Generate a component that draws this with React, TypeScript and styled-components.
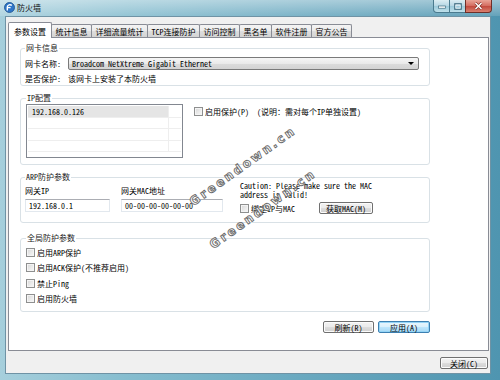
import React from 'react';
import styled, { createGlobalStyle } from 'styled-components';

const GlobalStyle = createGlobalStyle`
  html, body {
    margin: 0;
    padding: 0;
    background: #ffffff;
  }
  body {
    font-family: "Noto Sans Mono CJK SC", "Noto Sans CJK SC", "Liberation Mono", monospace;
    font-size: 8px;
    color: #000;
  }
  * {
    box-sizing: border-box;
  }
`;

const Window = styled.div`
  position: relative;
  width: 500px;
  height: 380px;
  display: flex;
  flex-direction: column;
  overflow: hidden;
  background: linear-gradient(90deg, #a6cfdc 0%, #86bdcf 25%, #6aa9c0 60%, #4f95b0 100%);
`;

const TitleBar = styled.div`
  height: 16px;
  display: flex;
  align-items: flex-start;
  flex-shrink: 0;
  background: linear-gradient(180deg, rgba(255, 255, 255, 0.45) 0%, rgba(255, 255, 255, 0.12) 100%);
`;

const AppIcon = styled.div`
  width: 11px;
  height: 11px;
  margin: 2px 2px 0 4px;
  display: flex;
`;

const Title = styled.div`
  line-height: 16px;
  font-size: 8px;
  color: #101010;
`;

const Controls = styled.div`
  margin-left: auto;
  margin-right: 8px;
  display: flex;
  height: 13px;
`;

const CaptionButton = styled.div<{ $w: number; $kind: 'min' | 'max' | 'close' }>`
  width: ${p => p.$w}px;
  height: 13px;
  display: flex;
  align-items: center;
  justify-content: center;
  border: 1px solid ${p => (p.$kind === 'close' ? '#6e2f28' : '#4a7a8e')};
  border-top: none;
  margin-left: ${p => (p.$kind === 'min' ? 0 : -1)}px;
  border-radius: ${p => (p.$kind === 'min' ? '0 0 0 4px' : p.$kind === 'close' ? '0 0 4px 0' : '0')};
  background: ${p =>
    p.$kind === 'close'
      ? 'linear-gradient(180deg, #e9a497 0%, #d46d61 48%, #c2493d 52%, #d9806f 100%)'
      : 'linear-gradient(180deg, #dcedf3 0%, #b7d7e4 48%, #9ccadb 52%, #bfe0ea 100%)'};
`;

const Client = styled.div`
  flex: 1;
  margin: 0 9px 6px 5px;
  display: flex;
  flex-direction: column;
  padding: 5px 1px 4px 2px;
  background: #f0f0f0;
  border: 1px solid #6f93a5;
`;

const TabStrip = styled.div`
  height: 15px;
  display: flex;
  align-items: flex-end;
  padding-left: 1px;
  position: relative;
  z-index: 1;
  flex-shrink: 0;
`;

const Tab = styled.div<{ $active?: boolean }>`
  height: ${p => (p.$active ? 16 : 13)}px;
  margin-bottom: ${p => (p.$active ? -1 : 0)}px;
  margin-left: -1px;
  padding: ${p => (p.$active ? '1px 5px 0' : '0 3.5px')};
  display: flex;
  align-items: center;
  white-space: nowrap;
  position: relative;
  z-index: ${p => (p.$active ? 2 : 1)};
  border: 1px solid #898c95;
  border-bottom: none;
  border-radius: 2px 2px 0 0;
  background: ${p =>
    p.$active ? '#ffffff' : 'linear-gradient(180deg, #f4f4f4 0%, #ebebeb 50%, #dedede 50%, #d4d4d4 100%)'};
`;

const Panel = styled.div`
  flex: 1;
  background: #ffffff;
  border: 1px solid #898c95;
  padding: 5px 0 0 11px;
  display: flex;
  flex-direction: column;
`;

const Group = styled.fieldset<{ $h: number; $top: number; $pad: string }>`
  margin: ${p => p.$top}px 0 0 0;
  width: 410px;
  height: ${p => p.$h}px;
  padding: ${p => p.$pad};
  border: 1px solid #d9e1e6;
  border-radius: 3px;
  min-width: 0;
  flex-shrink: 0;
`;

const Legend = styled.legend`
  padding: 0 1px;
  margin-left: 0;
  line-height: 10px;
  font-size: 8px;
  color: #1a1a1a;
`;

const Row = styled.div<{ $h: number; $top?: number }>`
  display: flex;
  align-items: center;
  height: ${p => p.$h}px;
  margin-top: ${p => p.$top || 0}px;
  white-space: nowrap;
`;

const Label = styled.span<{ $w?: number }>`
  display: inline-block;
  width: ${p => (p.$w ? `${p.$w}px` : 'auto')};
  flex-shrink: 0;
`;

const Combo = styled.div`
  width: 351px;
  height: 13px;
  display: flex;
  align-items: center;
  padding: 0 4px 0 3px;
  border: 1px solid #7a7a7a;
  border-radius: 2px;
  background: linear-gradient(180deg, #f6f6f6 0%, #eaeaea 50%, #dcdcdc 50%, #d3d3d3 100%);
`;

const ComboText = styled.span`
  flex: 1;
`;

const Arrow = styled.span`
  width: 0;
  height: 0;
  border-left: 3px solid transparent;
  border-right: 3px solid transparent;
  border-top: 3px solid #000;
`;

const ListBox = styled.div`
  width: 157px;
  height: 54px;
  border: 1px solid #828790;
  background: #fff;
  padding: 1px;
  overflow: hidden;
  flex-shrink: 0;
`;

const ListRow = styled.div`
  display: flex;
  height: 11.5px;
  border-bottom: 1px solid #eeeeee;
`;

const ListCell = styled.div<{ $wide?: boolean; $selected?: boolean }>`
  width: ${p => (p.$wide ? 142 : 12)}px;
  display: flex;
  align-items: center;
  padding-left: 4px;
  border-right: ${p => (p.$wide ? '1px solid #eeeeee' : 'none')};
  background: ${p => (p.$selected ? '#e5e5e5' : 'transparent')};
`;

const Check = styled.span`
  width: 9px;
  height: 9px;
  flex-shrink: 0;
  border: 1px solid #8e8f8f;
  background: linear-gradient(135deg, #d6d6d6 0%, #ececec 60%, #f7f7f7 100%);
  box-shadow: inset 0 0 0 1px #f4f4f4;
  margin-right: 2px;
`;

const TextBox = styled.div<{ $w: number }>`
  width: ${p => p.$w}px;
  height: 13px;
  display: flex;
  align-items: center;
  padding-left: 3px;
  border: 1px solid #e2e8ee;
  border-top-color: #abadb3;
  background: #fff;
`;

const Column = styled.div<{ $w: number }>`
  width: ${p => p.$w}px;
  display: flex;
  flex-direction: column;
  flex-shrink: 0;
`;

const Caution = styled.div`
  line-height: 9px;
  margin-top: -1px;
  white-space: nowrap;
`;

const Button = styled.div<{ $w: number; $default?: boolean }>`
  width: ${p => p.$w}px;
  height: 12px;
  display: flex;
  align-items: center;
  justify-content: center;
  flex-shrink: 0;
  white-space: nowrap;
  border: 1px solid ${p => (p.$default ? '#3c7fb1' : '#707070')};
  border-radius: 2px;
  background: ${p =>
    p.$default
      ? 'linear-gradient(180deg, #eaf6fd 0%, #d9f0fc 50%, #bee6fd 50%, #a7d9f5 100%)'
      : 'linear-gradient(180deg, #f2f2f2 0%, #ebebeb 50%, #dddddd 50%, #cfcfcf 100%)'};
  box-shadow: inset 0 0 0 1px ${p => (p.$default ? '#94d4f6' : '#fbfbfb')};
`;

const ButtonRow = styled.div`
  width: 410px;
  margin-top: 9px;
  display: flex;
  justify-content: flex-end;
  gap: 4px;
`;

const Footer = styled.div`
  margin-top: 6px;
  padding-right: 1px;
  display: flex;
  justify-content: flex-end;
  flex-shrink: 0;
`;

const CheckList = styled.div`
  display: flex;
  flex-direction: column;
  gap: 3.5px;
`;

const Watermark = styled.span<{ $x: number; $y: number }>`
  position: absolute;
  left: ${p => p.$x}px;
  top: ${p => p.$y}px;
  line-height: 14px;
  font-family: "DejaVu Sans", sans-serif;
  font-weight: bold;
  font-size: 12px;
  letter-spacing: 2.5px;
  white-space: nowrap;
  color: rgba(255, 255, 255, 0.92);
  -webkit-text-stroke: 0.9px #6a6a6a;
  transform: rotate(-35.5deg);
  transform-origin: 0 50%;
  pointer-events: none;
  z-index: 5;
`;

const tabs = ['参数设置', '统计信息', '详细流量统计', 'TCP连接防护', '访问控制', '黑名单', '软件注册', '官方公告'];

const globalOptions = ['启用ARP保护', '启用ACK保护(不推荐启用)', '禁止Ping', '启用防火墙'];

const Logo = () => (
  <svg width="11" height="11" viewBox="0 0 11 11">
    <circle cx="5.5" cy="5.5" r="5" fill="#2f76c9" stroke="#1c4f8c" strokeWidth="0.8" />
    <path d="M7.8 3.3 C6.2 2.2 3.6 2.6 3.3 5 L3.3 8.6" stroke="#fff" strokeWidth="1.4" fill="none" />
    <path d="M3.3 5.6 H6.6" stroke="#fff" strokeWidth="1.3" fill="none" />
  </svg>
);

export default function App() {
  return (
    <Window>
      <GlobalStyle />
      <TitleBar>
        <AppIcon>
          <Logo />
        </AppIcon>
        <Title>防火墙</Title>
        <Controls>
          <CaptionButton $w={17} $kind="min">
            <svg width="8" height="6" viewBox="0 0 8 6">
              <rect x="0.5" y="3" width="7" height="2.2" fill="#fff" stroke="#3d6a7e" strokeWidth="0.7" />
            </svg>
          </CaptionButton>
          <CaptionButton $w={17} $kind="max">
            <svg width="8" height="7" viewBox="0 0 8 7">
              <rect x="0.8" y="0.8" width="6.4" height="5.4" fill="none" stroke="#3d6a7e" strokeWidth="1.2" />
              <rect x="1.8" y="2" width="4.4" height="3.2" fill="none" stroke="#fff" strokeWidth="0.7" />
            </svg>
          </CaptionButton>
          <CaptionButton $w={27} $kind="close">
            <svg width="9" height="8" viewBox="0 0 9 8">
              <path d="M1.5 1 L7.5 7 M7.5 1 L1.5 7" stroke="#7a2a22" strokeWidth="2.6" />
              <path d="M1.5 1 L7.5 7 M7.5 1 L1.5 7" stroke="#fff" strokeWidth="1.5" />
            </svg>
          </CaptionButton>
        </Controls>
      </TitleBar>

      <Client>
        <TabStrip>
          {tabs.map((t, i) => (
            <Tab key={t} $active={i === 0}>
              {t}
            </Tab>
          ))}
        </TabStrip>
        <Panel>
          <Group $h={43} $top={0} $pad="4px 0 0 4px">
            <Legend>网卡信息</Legend>
            <Row $h={13}>
              <Label $w={43}>网卡名称:</Label>
              <Combo>
                <ComboText>Broadcom NetXtreme Gigabit Ethernet</ComboText>
                <Arrow />
              </Combo>
            </Row>
            <Row $h={10} $top={3}>
              <Label $w={43}>是否保护:</Label>
              <span>该网卡上安装了本防火墙</span>
            </Row>
          </Group>

          <Group $h={72} $top={7} $pad="1px 0 0 5px">
            <Legend>IP配置</Legend>
            <Row $h={54} style={{ alignItems: 'flex-start' }}>
              <ListBox>
                <ListRow>
                  <ListCell $wide $selected>192.168.0.126</ListCell>
                  <ListCell />
                </ListRow>
                <ListRow>
                  <ListCell $wide />
                  <ListCell />
                </ListRow>
                <ListRow>
                  <ListCell $wide />
                  <ListCell />
                </ListRow>
                <ListRow>
                  <ListCell $wide />
                  <ListCell />
                </ListRow>
              </ListBox>
              <Row $h={10} $top={2} style={{ marginLeft: 11 }}>
                <Check />
                <Label>启用保护(P)</Label>
                <Label style={{ marginLeft: 8 }}>(说明：需对每个IP单独设置)</Label>
              </Row>
            </Row>
          </Group>

          <Group $h={51} $top={7} $pad="0 0 0 4px">
            <Legend>ARP防护参数</Legend>
            <Row $h={33} style={{ alignItems: 'flex-start' }}>
              <Column $w={96}>
                <Row $h={10} $top={3}>网关IP</Row>
                <Row $h={13} $top={4}>
                  <TextBox $w={85}>192.168.0.1</TextBox>
                </Row>
              </Column>
              <Column $w={119}>
                <Row $h={10} $top={3}>网关MAC地址</Row>
                <Row $h={13} $top={4}>
                  <TextBox $w={102}>00-00-00-00-00-00</TextBox>
                </Row>
              </Column>
              <Column $w={150}>
                <Caution>
                  Caution: Please make sure the MAC
                  <br />
                  address is valid!
                </Caution>
                <Row $h={12} $top={3}>
                  <Check />
                  <Label>绑定IP与MAC</Label>
                  <Button $w={54} style={{ marginLeft: 24 }}>
                    获取MAC(M)
                  </Button>
                </Row>
              </Column>
            </Row>
          </Group>

          <Group $h={79} $top={10} $pad="3px 0 0 5px">
            <Legend>全局防护参数</Legend>
            <CheckList>
              {globalOptions.map(o => (
                <Row key={o} $h={12}>
                  <Check />
                  <Label>{o}</Label>
                </Row>
              ))}
            </CheckList>
          </Group>

          <ButtonRow>
            <Button $w={51}>刷新(R)</Button>
            <Button $w={52} $default>
              应用(A)
            </Button>
          </ButtonRow>
        </Panel>
        <Footer>
          <Button $w={48}>关闭(C)</Button>
        </Footer>
      </Client>

      <Watermark $x={191} $y={196}>Greendown.cn</Watermark>
      <Watermark $x={211} $y={239}>Greendown.cn</Watermark>
    </Window>
  );
}
